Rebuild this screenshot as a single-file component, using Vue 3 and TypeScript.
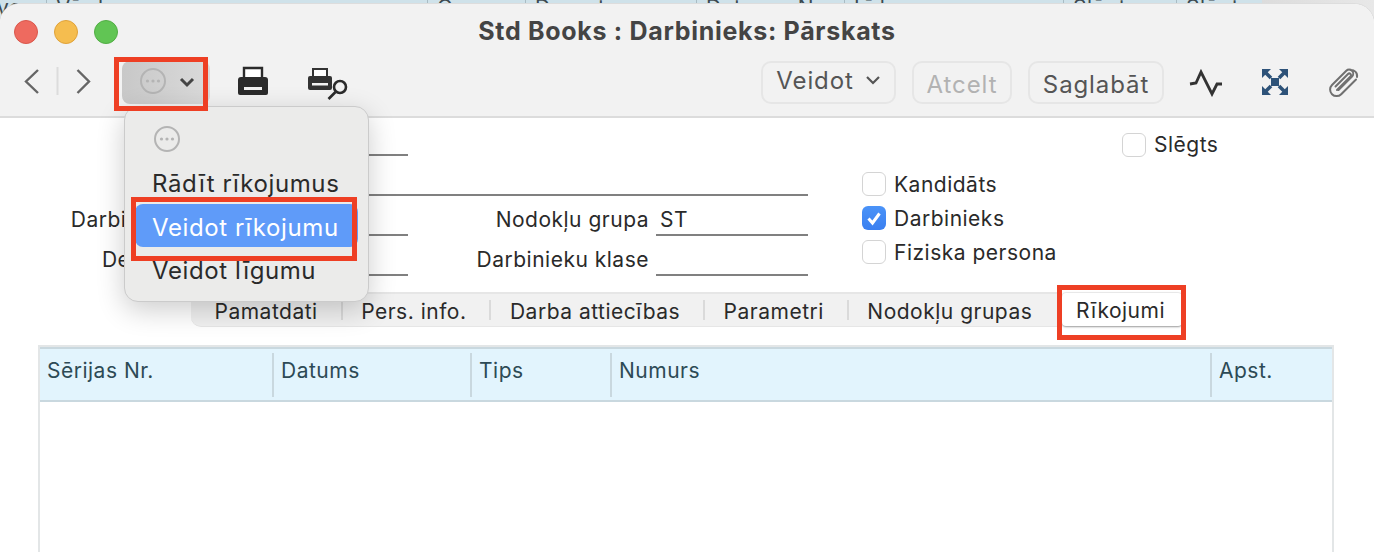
<script setup lang="ts">
interface Col { label: string; width: number }
const backCols: Col[] = [
  { label: 've', width: 50 },
  { label: 'Vārds', width: 381 },
  { label: 'Grupa', width: 98 },
  { label: 'Depart.', width: 171 },
  { label: 'Datums: No', width: 148 },
  { label: 'Līdz', width: 219 },
  { label: 'Slēgts', width: 113 },
  { label: 'Slēgts', width: 81 },
]
const tabs: string[] = ['Pamatdati', 'Pers. info.', 'Darba attiecības', 'Parametri', 'Nodokļu grupas']
const columns: Col[] = [
  { label: 'Sērijas Nr.', width: 234 },
  { label: 'Datums', width: 198 },
  { label: 'Tips', width: 140 },
  { label: 'Numurs', width: 600 },
  { label: 'Apst.', width: 120 },
]
const checks = [
  { label: 'Kandidāts', on: false },
  { label: 'Darbinieks', on: true },
  { label: 'Fiziska persona', on: false },
]
</script>

<template>
  <div class="screen">
    <div class="back-strip">
      <div v-for="(c, i) in backCols" :key="i" class="back-col" :style="{ width: c.width + 'px' }">{{ c.label }}</div>
    </div>

    <div class="window">
      <header class="titlebar">
        <div class="lights">
          <span class="light red"></span>
          <span class="light yellow"></span>
          <span class="light green"></span>
        </div>
        <h1 class="title">Std Books : Darbinieks: Pārskats</h1>
      </header>

      <div class="toolbar">
        <svg class="nav" width="76" height="32" viewBox="0 0 76 32">
          <polyline points="18,3 6,14.5 18,26" fill="none" stroke="#666" stroke-width="2.4" />
          <line x1="37.5" y1="0" x2="37.5" y2="28" stroke="#dcdcdc" stroke-width="2" />
          <polyline points="57.5,3 69,14.5 57.5,26" fill="none" stroke="#666" stroke-width="2.4" />
        </svg>

        <div class="action-btn">
          <svg width="88" height="43" viewBox="0 0 88 43">
            <circle cx="31" cy="20" r="12" fill="none" stroke="#b4b4b4" stroke-width="2" />
            <circle cx="25.5" cy="20" r="1.6" fill="#b4b4b4" />
            <circle cx="31" cy="20" r="1.6" fill="#b4b4b4" />
            <circle cx="36.5" cy="20" r="1.6" fill="#b4b4b4" />
            <polyline points="59,18 65,24 71,18" fill="none" stroke="#444" stroke-width="3" />
          </svg>
        </div>

        <svg class="print" width="34" height="32" viewBox="0 0 34 32">
          <path d="M8 11V2h18v9" fill="#fff" stroke="#2b2b2b" stroke-width="2.4" />
          <path d="M5 11h24a3 3 0 0 1 3 3v13a2 2 0 0 1-2 2H4a2 2 0 0 1-2-2V14a3 3 0 0 1 3-3z" fill="#2b2b2b" />
          <rect x="8" y="21" width="18" height="3" fill="#f2f2f2" />
        </svg>

        <svg class="preview" width="44" height="34" viewBox="0 0 44 34">
          <path d="M7 9V2h14v7" fill="#fff" stroke="#333" stroke-width="2" />
          <path d="M4 9h20a2 2 0 0 1 2 2v10a2 2 0 0 1-2 2H4a2 2 0 0 1-2-2V11a2 2 0 0 1 2-2z" fill="#333" />
          <rect x="6" y="16" width="16" height="2.5" fill="#f2f2f2" />
          <circle cx="34" cy="20" r="6" fill="#f2f2f2" stroke="#2b2b2b" stroke-width="2.6" />
          <line x1="29.5" y1="25" x2="22.5" y2="32" stroke="#2b2b2b" stroke-width="2.6" />
        </svg>

        <div class="spacer"></div>

        <button class="tb-btn veidot">Veidot
          <svg width="16" height="10" viewBox="0 0 16 10"><polyline points="2,2 8,8 14,2" fill="none" stroke="#555" stroke-width="2.2" /></svg>
        </button>
        <button class="tb-btn atcelt">Atcelt</button>
        <button class="tb-btn saglabat">Saglabāt</button>

        <svg class="wave" width="36" height="28" viewBox="0 0 36 28">
          <polyline points="2,15 8,14 13,3 24,25 29,15 34,15" fill="none" stroke="#333" stroke-width="2.8" />
        </svg>
        <svg class="expand" width="32" height="30" viewBox="0 0 32 30" fill="#2e5379">
          <rect x="12" y="11" width="8" height="8" />
          <path d="M3 2h9L3 11z" />
          <path d="M29 2h-9l9 9z" />
          <path d="M3 28h9L3 19z" />
          <path d="M29 28h-9l9-9z" />
          <path d="M6 5l6 6M26 5l-6 6M6 25l6-6M26 25l-6-6" stroke="#2e5379" stroke-width="3.600" fill="none" />
        </svg>
        <svg class="clip" width="34" height="34" viewBox="0 0 34 34">
          <path d="M12.5 25 L26 11.500 a4 4 0 0 0 -5.700 -5.700 L6 20 a6.500 6.500 0 0 0 9.200 9.200 L30 14.500 M24 5 a6 6 0 0 1 7 7 M9.500 21.500 L22 9 a1.500 1.500 0 0 1 2.500 2.500 L11 25"
            fill="none" stroke="#707070" stroke-width="2" stroke-linecap="round" />
        </svg>
      </div>

      <main class="content">
        <section class="form">
          <div class="fields">
            <span></span><span class="field short"></span><span></span><span></span>
            <span></span><span class="field wide"></span>
            <label class="lbl lbl-code">Darbinieka kods</label><span class="field short"></span>
            <label class="lbl second">Nodokļu grupa</label><span class="field value">ST</span>
            <label class="lbl lbl-dept">Departaments</label><span class="field short"></span>
            <label class="lbl second">Darbinieku klase</label><span class="field"></span>
          </div>
          <div class="checks">
            <label v-for="c in checks" :key="c.label" class="check">
              <span class="box" :class="{ on: c.on }">
                <svg v-if="c.on" width="24" height="24" viewBox="0 0 24 24"><polyline points="6.500,12.500 10.500,17 17.500,7.500" fill="none" stroke="#fff" stroke-width="3" /></svg>
              </span>{{ c.label }}
            </label>
          </div>
          <div class="closed">
            <label class="check"><span class="box"></span>Slēgts</label>
          </div>
        </section>

        <nav class="tabs">
          <div class="tabbar">
            <span v-for="t in tabs" :key="t" class="tab">{{ t }}</span>
          </div>
          <span class="tab-active">Rīkojumi</span>
        </nav>

        <section class="table">
          <div class="thead">
            <div v-for="c in columns" :key="c.label" class="th" :style="{ width: c.width + 'px' }">{{ c.label }}</div>
          </div>
          <div class="tbody"></div>
        </section>
      </main>
    </div>

    <div class="menu">
      <div class="menu-icon">
        <svg width="28" height="28" viewBox="0 0 28 28">
          <circle cx="14" cy="14" r="12" fill="none" stroke="#b4b4b4" stroke-width="2" />
          <circle cx="8.500" cy="14" r="1.600" fill="#b4b4b4" />
          <circle cx="14" cy="14" r="1.600" fill="#b4b4b4" />
          <circle cx="19.500" cy="14" r="1.600" fill="#b4b4b4" />
        </svg>
      </div>
      <div class="menu-item">Rādīt rīkojumus</div>
      <div class="menu-item active">Veidot rīkojumu</div>
      <div class="menu-item">Veidot līgumu</div>
    </div>

    <div class="mark mark-action"></div>
    <div class="mark mark-item"></div>
    <div class="mark mark-tab"></div>
  </div>
</template>

<style>
html, body { margin: 0; background: #fff; }
</style>

<style scoped>
.screen {
  position: relative;
  width: 1374px;
  height: 552px;
  overflow: hidden;
  font-family: Inter, "Noto Sans", "Liberation Sans", sans-serif;
  color: #2a2a2a;
  background: linear-gradient(90deg, #cfe2ea 0, #cfe2ea 1262px, #dcdcdc 1262px, #e8e8e8 100%);
}
.back-strip {
  display: flex;
  height: 20px;
  font-size: 21px;
  line-height: 16px;
  letter-spacing: 0.5px;
  color: #3c4a50;
  overflow: hidden;
}
.back-col {
  box-sizing: border-box;
  padding-left: 9px;
  border-right: 1px solid #a9bcc4;
  height: 20px;
  flex: none;
  white-space: nowrap;
  overflow: hidden;
}
.back-col:first-child { padding-left: 0; margin-left: -3px; }
.back-col:last-child { border-right: 0; }
.window {
  position: relative;
  margin-top: -16px;
  height: 548px;
  background: #fff;
  border-radius: 20px 20px 0 0;
  overflow: hidden;
  box-shadow: 0 0 0 1px #dddddd;
}
.titlebar {
  position: relative;
  height: 54px;
  background: #f2f2f2;
  display: flex;
  align-items: center;
  justify-content: center;
}
.lights {
  position: absolute;
  left: 14px;
  top: 16px;
  display: flex;
  gap: 16px;
}
.light {
  width: 22px;
  height: 22px;
  border-radius: 50%;
  border: 1px solid;
}
.red { background: #ee6a5f; border-color: #d9574c; }
.yellow { background: #f5bd4f; border-color: #dfa23a; }
.green { background: #61c554; border-color: #52ad45; }
.title {
  margin: 0;
  font-size: 25px;
  font-weight: 700;
  letter-spacing: 0.7px;
  line-height: 54px;
  color: #444;
}
.toolbar {
  display: flex;
  align-items: center;
  height: 60px;
  padding: 0 14px 10px 20px;
  box-sizing: border-box;
  background: #f2f2f2;
  border-bottom: 2px solid #dcdcdc;
}
.nav { margin-top: 2px; }
.action-btn {
  margin-left: 26px;
  width: 88px;
  height: 43px;
  border-radius: 8px;
  background: linear-gradient(90deg, #c8c8c8, #dadada);
}
.action-btn svg { display: block; }
.print { margin-left: 26px; }
.preview { margin-left: 36px; margin-top: 4px; }
.spacer { flex: 1; }
.tb-btn {
  box-sizing: border-box;
  height: 43px;
  padding: 0;
  background: #f2f2f2;
  border: 2px solid #e6e6e6;
  border-radius: 10px;
  font-family: inherit;
  font-size: 24px;
  letter-spacing: 0.9px;
  color: #555;
}
.veidot { width: 135px; margin-right: 16px; display: flex; align-items: center; justify-content: center; gap: 11px; padding-bottom: 4px; }
.atcelt { width: 100px; margin-right: 16px; color: #b2b2b2; padding-top: 4px; }
.saglabat { width: 136px; padding-top: 4px; }
.wave { margin-left: 24px; margin-top: 2px; }
.expand { margin-left: 35px; }
.clip { margin-left: 35px; }
.content { background: #fff; }
.form {
  display: flex;
  height: 174px;
}
.fields {
  display: grid;
  grid-template-columns: 240px 160px 248px 152px;
  grid-template-rows: 38px 40px 40px 40px;
  width: 808px;
  padding-left: 8px;
  box-sizing: border-box;
  align-items: end;
}
.field {
  box-sizing: border-box;
  height: 34px;
  border-bottom: 2px solid #808080;
  font-size: 21px;
  letter-spacing: 0.5px;
  line-height: 36px;
  padding-left: 4px;
}
.field.wide { grid-column: 2 / 5; }
.lbl {
  font-size: 21px;
  letter-spacing: 0.5px;
  line-height: 36px;
  text-align: right;
  white-space: nowrap;
  padding-right: 7px;
  height: 34px;
  color: #2a2a2a;
}
.lbl-code { padding-right: 10px; }
.lbl-dept { padding-right: 0; }
.checks {
  margin-left: 54px;
  width: 260px;
  padding-top: 54px;
  display: flex;
  flex-direction: column;
  gap: 10px;
}
.closed { padding-top: 15px; }
.check {
  display: flex;
  align-items: flex-start;
  gap: 8px;
  font-size: 21px;
  letter-spacing: 0.5px;
  line-height: 26px;
  height: 24px;
  white-space: nowrap;
}
.closed .check { line-height: 24px; }
.box {
  box-sizing: border-box;
  width: 24px;
  height: 24px;
  border-radius: 6px;
  background: #fff;
  border: 1.500px solid #d4d4d4;
  flex: none;
}
.box.on {
  background: linear-gradient(#4a93f8, #3a7ff0);
  border: 0;
}
.box svg { display: block; }
.tabs {
  display: flex;
  align-items: flex-start;
  padding-left: 191px;
  height: 53px;
}
.tabbar {
  box-sizing: border-box;
  display: flex;
  align-items: center;
  width: 866px;
  height: 35px;
  background: #f1f1f1;
  border-top: 2px solid #e6e6e6;
  border-bottom: 1px solid #e6e6e6;
  border-radius: 0 0 0 10px;
  padding-left: 5px;
}
.tab {
  height: 20px;
  font-size: 21px;
  letter-spacing: 0.5px;
  line-height: 24px;
  padding: 0 23px 0 18.500px;
  border-right: 2px solid #dadada;
  white-space: nowrap;
}
.tab:last-child { border-right: 0; }
.tab-active {
  box-sizing: border-box;
  margin-left: 5px;
  margin-top: 1px;
  width: 120px;
  height: 33px;
  background: #fff;
  border-radius: 4px;
  box-shadow: 0 1px 2px rgba(0, 0, 0, 0.4), 0 -1px 1px rgba(0, 0, 0, 0.08);
  font-size: 21px;
  letter-spacing: 0.5px;
  line-height: 36px;
  padding-left: 14px;
}
.table {
  margin-left: 38px;
  width: 1296px;
  box-sizing: border-box;
  border: 2px solid #e3e6e7;
  border-bottom: 0;
  height: 300px;
}
.thead {
  display: flex;
  height: 55px;
  box-sizing: border-box;
  background: #e2f4fd;
  border-top: 2px solid #c9d8df;
  border-bottom: 2px solid #c9d8df;
  padding-top: 4px;
}
.th {
  box-sizing: border-box;
  flex: none;
  height: 44px;
  padding-left: 7px;
  font-size: 21px;
  letter-spacing: 0.5px;
  line-height: 36px;
  color: #2d4a55;
  border-right: 2px solid #c9d8df;
}
.th:last-child { border-right: 0; }
.menu {
  position: absolute;
  left: 124px;
  top: 106px;
  box-sizing: border-box;
  width: 245px;
  height: 196px;
  background: #ebebea;
  border: 1px solid #cbcbcb;
  border-radius: 14px;
  box-shadow: 0 8px 28px rgba(0, 0, 0, 0.2);
  padding: 18px 10px 0;
}
.menu-icon { height: 36px; padding-left: 18px; }
.menu-icon svg { display: block; }
.menu-item {
  height: 43px;
  padding-left: 17px;
  font-size: 24px;
  letter-spacing: 0.6px;
  line-height: 45px;
  color: #2a2a2a;
  border-radius: 8px;
  white-space: nowrap;
}
.menu-item.active {
  background: #5f9bf9;
  color: #fff;
  line-height: 47px;
}
.menu-item.active + .menu-item { line-height: 47px; }
.mark {
  position: absolute;
  box-sizing: border-box;
  border: 5px solid #ee3f24;
}
.mark-action { left: 114px; top: 57px; width: 94px; height: 54px; }
.mark-item { left: 131px; top: 197px; width: 226px; height: 64px; }
.mark-tab { left: 1057px; top: 285px; width: 129px; height: 55px; }
</style>
